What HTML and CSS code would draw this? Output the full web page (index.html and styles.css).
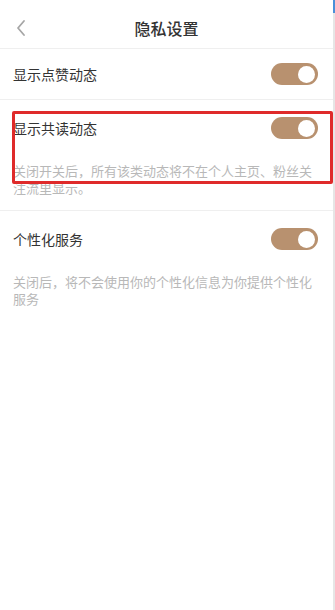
FILE: index.html
```html
<!DOCTYPE html>
<html lang="zh-CN">
<head>
<meta charset="utf-8">
<title>隐私设置</title>
<link rel="stylesheet" href="styles.css">
</head>
<body>
<div class="page">
  <div class="screen">
    <header class="nav">
      <svg class="back" width="12" height="18" viewBox="0 0 12 18"><path d="M9 2 L3 9 L9 16" fill="none" stroke="#a6a6a6" stroke-width="1.8" stroke-linecap="round" stroke-linejoin="round"/></svg>
      <h1 class="title">隐私设置</h1>
    </header>
    <section class="item">
      <div class="row">
        <span class="label">显示点赞动态</span>
        <span class="switch"><span class="knob"></span></span>
      </div>
    </section>
    <section class="item highlight-host">
      <div class="row tall">
        <span class="label">显示共读动态</span>
        <span class="switch"><span class="knob"></span></span>
      </div>
      <p class="desc">关闭开关后，所有该类动态将不在个人主页、粉丝关注流里显示。</p>
      <div class="mark"></div>
    </section>
    <section class="item last">
      <div class="row tall">
        <span class="label">个性化服务</span>
        <span class="switch"><span class="knob"></span></span>
      </div>
      <p class="desc">关闭后，将不会使用你的个性化信息为你提供个性化服务</p>
    </section>
  </div>
  <div class="edge"><div class="edge-top"></div></div>
</div>
</body>
</html>
```
FILE: styles.css
```css
* { box-sizing: border-box; }
html, body { margin: 0; padding: 0; background: #fff; }
body {
  font-family: "Noto Sans CJK SC", "Noto Sans", sans-serif;
  color: #333;
}
.page {
  display: flex;
  width: 335px;
  height: 610px;
}
.screen {
  flex: 1;
  min-width: 0;
}
.edge {
  width: 2px;
  background: #e6e6e6;
}
.edge-top {
  height: 13px;
  background: #4a8fd8;
}
.nav {
  position: relative;
  height: 49px;
  border-bottom: 1px solid #efefef;
  display: flex;
  align-items: center;
  justify-content: center;
}
.back {
  position: absolute;
  left: 15px;
  top: 19px;
}
.title {
  margin: 0;
  font-size: 16px;
  font-weight: 500;
  color: #333;
  line-height: 20px;
  padding-top: 8px;
}
.item {
  border-bottom: 1px solid #efefef;
  padding: 0 15px 0 13px;
}
.item.last { border-bottom: none; }
.highlight-host { position: relative; padding-bottom: 14px; }
.item.last { padding-bottom: 14px; }
.row {
  height: 50px;
  display: flex;
  align-items: center;
  justify-content: space-between;
}
.row.tall { height: 56px; }
.label {
  font-size: 14px;
  color: #333;
}
.switch {
  width: 47px;
  height: 22px;
  border-radius: 11px;
  background: #b8916f;
  display: flex;
  align-items: center;
  justify-content: flex-end;
  padding-right: 3px;
}
.knob {
  width: 17px;
  height: 17px;
  border-radius: 50%;
  background: #fff;
}
.desc {
  margin: 0;
  padding-top: 6px;
  font-size: 13px;
  line-height: 17px;
  color: #b8b8b8;
  padding-right: 4px;
}
.mark {
  position: absolute;
  left: 12px;
  right: 0;
  top: 11px;
  height: 73px;
  border: 3px solid #df2a2a;
  border-radius: 2px;
  pointer-events: none;
}
```
